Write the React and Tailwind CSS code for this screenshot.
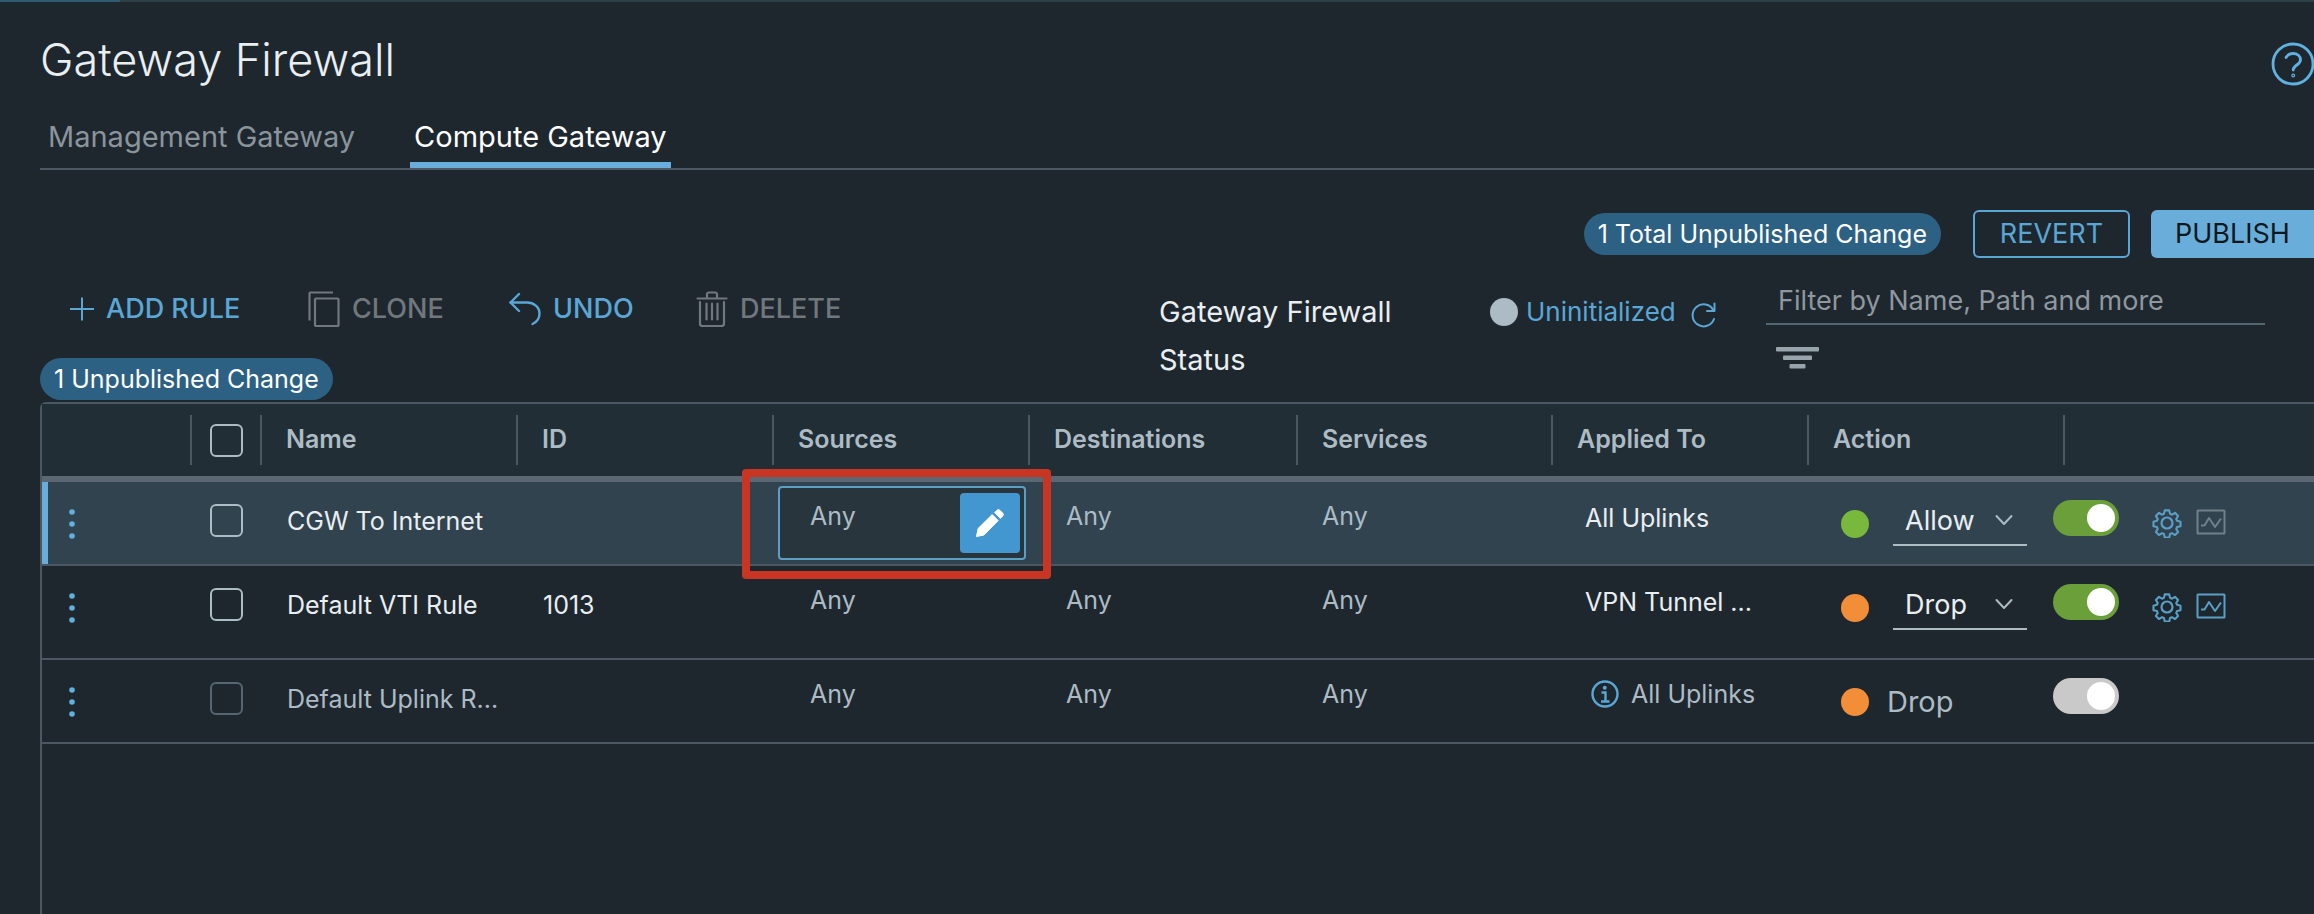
import React, { useState } from "react";

const initialRules = [
  {
    id: "cgw",
    name: "CGW To Internet",
    ruleId: "",
    appliedTo: "All Uplinks",
    action: "Allow",
    enabled: true,
    selected: true,
    stats: false,
  },
  {
    id: "vti",
    name: "Default VTI Rule",
    ruleId: "1013",
    appliedTo: "VPN Tunnel ...",
    action: "Drop",
    enabled: true,
    stats: true,
  },
  {
    id: "uplink",
    name: "Default Uplink R...",
    ruleId: "",
    appliedTo: "All Uplinks",
    action: "Drop",
    enabled: true,
    locked: true,
  },
];

const columns = ["Name", "ID", "Sources", "Destinations", "Services", "Applied To", "Action"];

/* ---------- icons ---------- */

function PlusIcon() {
  return (
    <svg className="w-6 h-6" viewBox="0 0 24 24" fill="none" stroke="currentColor" strokeWidth="2">
      <path d="M12 0.500v23M0 12h24" />
    </svg>
  );
}

function CloneIcon() {
  return (
    <svg className="w-8 h-9" viewBox="0 0 32 36" fill="none" stroke="currentColor" strokeWidth="2.200" strokeLinejoin="round">
      <path d="M1.500 29.500V2.500a1 1 0 0 1 1-1H25" />
      <rect x="7" y="7.500" width="23.500" height="27.500" rx="1" />
    </svg>
  );
}

function UndoIcon() {
  return (
    <svg className="w-8 h-9" viewBox="0 0 32 36" fill="none" stroke="currentColor" strokeWidth="2.400" strokeLinecap="round" strokeLinejoin="round">
      <path d="M10 3 1.500 11.500 10 20" />
      <path d="M1.500 11.500H18c7 0 12.500 4.500 12.500 11 0 4.500-2.500 8.500-7 10.500" />
    </svg>
  );
}

function TrashIcon() {
  return (
    <svg className="w-8 h-9" viewBox="0 0 32 36" fill="none" stroke="currentColor" strokeWidth="2.200" strokeLinecap="round" strokeLinejoin="round">
      <path d="M1.500 7.500h29M11 7V3.500a2 2 0 0 1 2-2h6a2 2 0 0 1 2 2V7" />
      <path d="M4 11v21.500A2.500 2.500 0 0 0 6.500 35h19a2.500 2.500 0 0 0 2.500-2.500V11" />
      <path d="M10.500 12.500v16M16 12.500v16M21.500 12.500v16" />
    </svg>
  );
}

function RefreshIcon() {
  return (
    <svg className="w-[26px] h-[26px]" viewBox="0 0 26 26" fill="none" stroke="currentColor" strokeWidth="2" strokeLinecap="round" strokeLinejoin="round">
      <path d="M23.500 8.500A11 11 0 1 0 24 17" />
      <path d="M24.500 1.500v7.500h-7.500" />
    </svg>
  );
}

function HelpIcon() {
  return (
    <svg className="w-11 h-11" viewBox="0 0 44 44" fill="none" stroke="currentColor" strokeWidth="2.800" strokeLinecap="round">
      <circle cx="23" cy="22" r="20" />
      <path d="M16 15.500c1.500-2.500 4-4 7-4 4.500 0 7.500 2.600 7.500 6.200 0 5.300-7.300 5.300-7.300 10.300" />
      <circle cx="23.200" cy="33.500" r="0.600" />
    </svg>
  );
}

function FilterLinesIcon() {
  return (
    <svg className="w-[43px] h-[22px]" viewBox="0 0 43 22" fill="currentColor">
      <rect x="0" y="0" width="43" height="4.500" rx="1" />
      <rect x="7" y="8.500" width="29" height="4.500" rx="1" />
      <rect x="13.500" y="17" width="16" height="4.500" rx="1" />
    </svg>
  );
}

function KebabIcon() {
  return (
    <svg className="w-1.5 h-[30px]" viewBox="0 0 6 30" fill="currentColor">
      <circle cx="3" cy="3" r="2.800" />
      <circle cx="3" cy="15" r="2.800" />
      <circle cx="3" cy="27" r="2.800" />
    </svg>
  );
}

function PencilIcon() {
  return (
    <svg className="w-[30px] h-[30px]" viewBox="0 0 30 30" fill="currentColor" stroke="currentColor" strokeWidth="1" strokeLinejoin="round">
      <path d="M1.500 28.500l1.600-8L17.200 6.600l6 6L9 27z" />
      <path d="M19.600 4.600l2.200-2.200a2.200 2.200 0 0 1 3.200 0l2.600 2.600a2.200 2.200 0 0 1 0 3.200l-2.200 2.200z" />
    </svg>
  );
}

function InfoIcon() {
  return (
    <svg className="w-7 h-7" viewBox="0 0 28 28" fill="none" stroke="currentColor" strokeWidth="2.400">
      <circle cx="14" cy="14" r="12.500" />
      <circle cx="13.800" cy="7.800" r="2" fill="currentColor" stroke="none" />
      <path d="M10.500 12.500H14.500V21M10 21.500h8.500" />
    </svg>
  );
}

function GearIcon() {
  return (
    <svg className="w-[30px] h-[30px]" viewBox="0 0 30 30" fill="none" stroke="currentColor" strokeWidth="2.200" strokeLinejoin="round">
      <circle cx="15" cy="15" r="5.500" />
      <path d="M12.600 1.500h4.800l.9 3.700 2 .9 3.300-2 3.300 3.300-2 3.300.9 2 3.700.9v4.800l-3.700.9-.9 2 2 3.300-3.300 3.300-3.300-2-2 .9-.9 3.700h-4.800l-.9-3.700-2-.9-3.300 2-3.300-3.300 2-3.300-.9-2-3.700-.9v-4.800l3.700-.9.9-2-2-3.300 3.300-3.300 3.300 2 2-.9z" transform="translate(1 1) scale(.933)" />
    </svg>
  );
}

function ChartIcon() {
  return (
    <svg className="w-[30px] h-[26px]" viewBox="0 0 30 26" fill="none" stroke="currentColor" strokeWidth="2" strokeLinejoin="round">
      <rect x="1.500" y="1.500" width="27" height="23" rx="0.500" />
      <path d="M5 16.500h3.500l4.500-7.500 6 9 6-8.500" />
    </svg>
  );
}

function ChevronDown() {
  return (
    <svg className="absolute right-3.5 top-3.5 w-[18px] h-3 pointer-events-none text-[#adbbc4]" viewBox="0 0 18 12" fill="none" stroke="currentColor" strokeWidth="2" strokeLinecap="round" strokeLinejoin="round">
      <path d="M1.500 2 9 10l7.500-8" />
    </svg>
  );
}

/* ---------- small pieces ---------- */

function CheckBox({ label, disabled }) {
  return (
    <input
      type="checkbox"
      aria-label={label}
      disabled={disabled}
      className="block mx-auto w-[33px] h-[33px] appearance-none rounded-md border-2 border-[#adbbc4] disabled:border-[#566670] checked:bg-[#69aeda]"
    />
  );
}

function ChangeBadge({ children }) {
  return (
    <span className="inline-flex items-center h-[42px] px-3.5 rounded-full bg-[#2d6183] text-white text-[25px] leading-8 whitespace-nowrap">
      {children}
    </span>
  );
}

function ToolbarButton({ icon, children, disabled }) {
  return (
    <button
      type="button"
      disabled={disabled}
      className="flex items-center gap-3 h-12 text-[27px] leading-8 font-medium text-[#5aa7d6] disabled:text-[#71787d]"
    >
      {icon}
      {children}
    </button>
  );
}

function RuleRow({ rule, onAction, onToggle }) {
  const cell = "p-0 align-top border-b-2 border-[#4b5863]";
  const muted = "text-[#adbbc4]";
  const nameColor = rule.locked ? muted : "text-[#e9eef1]";

  return (
    <tr className={rule.selected ? "h-[84px] bg-[#31434f]" : rule.locked ? "h-[84px]" : "h-[94px]"}>
      <td className={cell}>
        <div className={rule.selected ? "h-[82px] pt-[27px] pl-[21px] border-l-[6px] border-[#69aeda]" : "pt-[27px] pl-[27px]"}>
          <button type="button" aria-label={`Menu for ${rule.name}`} className="block text-[#5fb1e0]">
            <KebabIcon />
          </button>
        </div>
      </td>
      <td className={`${cell} pt-[22px] pr-0.5`}>
        <CheckBox label={`Select ${rule.name}`} disabled={rule.locked} />
      </td>
      <td className={`${cell} pt-[23px] pl-[25px] ${nameColor}`}>{rule.name}</td>
      <td className={`${cell} pt-[23px] pl-[25px] text-[#e9eef1]`}>{rule.ruleId}</td>
      <td className={`${cell} ${muted} ${rule.selected ? "pt-1 px-1" : "pt-[18px] pl-9"}`}>
        {rule.selected ? (
          <div className="relative flex justify-between h-[74px] rounded-sm border-2 border-[#5a9fc4] bg-[#28353d] pl-[30px] pr-1">
            <span className="pt-3">Any</span>
            <button
              type="button"
              aria-label="Edit sources"
              className="flex items-center justify-center self-center w-[60px] h-[60px] rounded-sm bg-[#4397d1] text-white"
            >
              <PencilIcon />
            </button>
            {/* callout frame */}
            <div className="absolute -left-[38px] -right-[27px] -top-[19px] -bottom-[21px] border-8 border-[#c83523] rounded-sm pointer-events-none" />
          </div>
        ) : (
          "Any"
        )}
      </td>
      <td className={`${cell} pt-[18px] pl-9 ${muted}`}>Any</td>
      <td className={`${cell} pt-[18px] pl-6 ${muted}`}>Any</td>
      <td className={`${cell} ${rule.locked ? "pt-[18px]" : "pt-5"} pl-8 ${nameColor}`}>
        {rule.locked ? (
          <span className="flex items-center gap-3 pl-1.5">
            <span className="text-[#5aa7d6]">
              <InfoIcon />
            </span>
            {rule.appliedTo}
          </span>
        ) : (
          rule.appliedTo
        )}
      </td>
      <td className={`${cell} pt-[18px] pl-8`}>
        <div className="flex items-start">
          <span
            className={`mt-2.5 w-7 h-7 rounded-full ${rule.action === "Allow" ? "bg-[#77b83d]" : "bg-[#f28d38]"}`}
          />
          {rule.locked ? (
            <span className={`ml-[18px] mt-2 text-[29px] leading-8 ${muted}`}>{rule.action}</span>
          ) : (
            <div className="relative ml-6">
              <select
                aria-label={`Action for ${rule.name}`}
                value={rule.action}
                onChange={(e) => onAction(rule.id, e.target.value)}
                className="block w-[134px] h-[46px] pl-3 pb-0.5 appearance-none bg-transparent border-b-2 border-[#adbbc4] text-[27px] text-[#e9eef1]"
              >
                <option>Allow</option>
                <option>Drop</option>
              </select>
              <ChevronDown />
            </div>
          )}
        </div>
      </td>
      <td className={`${cell} pt-[18px]`}>
        <div className="flex items-start -ml-3">
          <input
            type="checkbox"
            role="switch"
            aria-label={`Enable ${rule.name}`}
            checked={rule.enabled}
            disabled={rule.locked}
            onChange={() => onToggle(rule.id)}
            className="flex items-center w-[66px] h-9 px-1 appearance-none rounded-full bg-[#c9c9c9] checked:justify-end checked:bg-[#6a9f3a] disabled:bg-[#c9c9c9] before:content-[''] before:w-7 before:h-7 before:rounded-full before:bg-white"
          />
          {!rule.locked && (
            <>
              <button type="button" aria-label="Rule settings" className="ml-[33px] mt-2 text-[#5a9fc4]">
                <GearIcon />
              </button>
              <button
                type="button"
                aria-label="Rule statistics"
                disabled={!rule.stats}
                className="ml-3.5 mt-[9px] text-[#5a9fc4] disabled:text-[#71808a]"
              >
                <ChartIcon />
              </button>
            </>
          )}
        </div>
      </td>
    </tr>
  );
}

export default function App() {
  const [rules, setRules] = useState(initialRules);
  const [filter, setFilter] = useState("");

  const handleAction = (id, action) => {
    setRules((prev) => prev.map((r) => (r.id === id ? { ...r, action } : r)));
  };

  const handleToggle = (id) => {
    setRules((prev) => prev.map((r) => (r.id === id ? { ...r, enabled: !r.enabled } : r)));
  };

  return (
    <div className="min-h-screen flex flex-col overflow-hidden bg-[#1e272e] text-[#e9eef1] text-[25px] leading-8 font-['Inter',sans-serif]">
      <div className="h-0.5 bg-[#2d3e46]">
        <div className="w-[120px] h-0.5 bg-[#2f5a70]" />
      </div>

      <header className="flex justify-between items-start pl-10 pt-[30px]">
        <h1 className="text-[45px] leading-[56px] font-light">Gateway Firewall</h1>
        <button type="button" aria-label="Help" className="mt-2.5 text-[#5fb1e0]">
          <HelpIcon />
        </button>
      </header>

      <nav className="flex gap-[47px] ml-10 mt-[31px] border-b-2 border-[#4b5863] text-[29px] leading-9">
        <a href="#management" className="px-2 pb-[7px] text-[#8a949b]">
          Management Gateway
        </a>
        <a href="#compute" className="px-1 pb-[7px] text-white border-b-[6px] border-[#69aeda]">
          Compute Gateway
        </a>
      </nav>

      <div className="flex justify-end items-center mt-10">
        <ChangeBadge>1 Total Unpublished Change</ChangeBadge>
        <button type="button" className="ml-8 w-[157px] h-12 rounded-md border-2 border-[#5aa7d6] text-[27px] text-[#5aa7d6]">
          REVERT
        </button>
        <button type="button" className="ml-[21px] w-[163px] h-12 rounded-l-md bg-[#69aeda] text-[27px] text-[#10181e]">
          PUBLISH
        </button>
      </div>

      <div className="flex justify-between items-start ml-10 mr-[49px] mt-[19px] pb-0.5">
        <div className="pt-2">
          <div className="flex pl-[30px]">
            <div className="w-[238px]">
              <ToolbarButton icon={<PlusIcon />}>ADD RULE</ToolbarButton>
            </div>
            <div className="w-[201px]">
              <ToolbarButton icon={<CloneIcon />} disabled>CLONE</ToolbarButton>
            </div>
            <div className="w-[187px]">
              <ToolbarButton icon={<UndoIcon />}>UNDO</ToolbarButton>
            </div>
            <ToolbarButton icon={<TrashIcon />} disabled>DELETE</ToolbarButton>
          </div>
          <div className="flex mt-[25px]">
            <ChangeBadge>1 Unpublished Change</ChangeBadge>
          </div>
        </div>

        <div className="flex items-start">
          <p className="w-[300px] mr-[31px] pt-[11px] text-[29px] leading-[48px]">Gateway Firewall Status</p>
          <div className="flex items-center w-[276px] pt-[19px] text-[#5aa7d6]">
            <span className="w-7 h-7 mr-2 rounded-full bg-[#adbbc4]" />
            <a href="#status" className="w-[154px] text-[26px]">Uninitialized</a>
            <button type="button" aria-label="Refresh status" className="ml-2.5 mt-1.5">
              <RefreshIcon />
            </button>
          </div>
          <div className="w-[499px]">
            <input
              type="text"
              aria-label="Filter rules"
              placeholder="Filter by Name, Path and more"
              value={filter}
              onChange={(e) => setFilter(e.target.value)}
              className="block w-full h-12 px-3 bg-transparent border-b-2 border-[#566670] text-[27px] placeholder:text-[#8e989e] outline-none"
            />
            <button type="button" aria-label="Filter options" className="block ml-2.5 mt-[22px] text-[#98a4ac]">
              <FilterLinesIcon />
            </button>
          </div>
        </div>
      </div>

      <main className="flex-1 ml-10 border-t-2 border-l-2 border-[#4b5863] rounded-tl-md">
        <table className="w-full table-fixed border-separate border-spacing-0 text-left">
          <colgroup>
            <col className="w-[150px]" />
            <col className="w-[70px]" />
            <col className="w-[256px]" />
            <col className="w-[256px]" />
            <col className="w-[256px]" />
            <col className="w-[268px]" />
            <col className="w-[255px]" />
            <col className="w-[256px]" />
            <col className="w-[256px]" />
            <col />
          </colgroup>
          <thead>
            <tr className="h-[78px] bg-[#212e35] text-[#adbbc4]">
              <th className="p-0 border-b-[6px] border-[#5b6874]">
                <div className="h-[50px] border-r-2 border-[#4b5863]" />
              </th>
              <th className="p-0 border-b-[6px] border-[#5b6874]">
                <div className="flex items-center h-[50px] border-r-2 border-[#4b5863]">
                  <CheckBox label="Select all rules" />
                </div>
              </th>
              {columns.map((col) => (
                <th key={col} className="p-0 border-b-[6px] border-[#5b6874] font-semibold">
                  <div className="h-[50px] pl-6 pt-2 border-r-2 border-[#4b5863]">{col}</div>
                </th>
              ))}
              <td className="p-0 border-b-[6px] border-[#5b6874]" />
            </tr>
          </thead>
          <tbody>
            {rules.map((rule) => (
              <RuleRow key={rule.id} rule={rule} onAction={handleAction} onToggle={handleToggle} />
            ))}
          </tbody>
        </table>
      </main>
    </div>
  );
}
